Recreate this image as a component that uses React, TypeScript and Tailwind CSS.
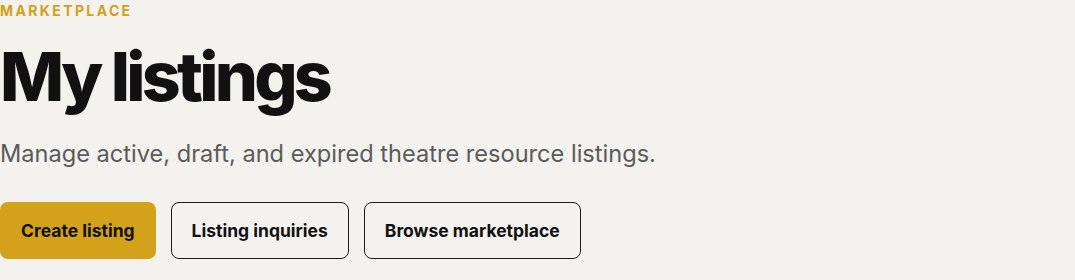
export default function App() {
  return (
    <div className="min-h-[280px] w-full bg-[#f3f2ef] font-['Inter',sans-serif]">
      <div className="flex flex-col items-start">
        <div className="text-[14px] leading-[22px] font-bold tracking-[0.17em] text-[#d4a017]">MARKETPLACE</div>
        <h1 className="mt-[20px] text-[68px] leading-none font-extrabold tracking-[-0.055em] text-[#111111]">My listings</h1>
        <p className="mt-[27px] text-[23.6px] leading-[33px] text-[#5b5b5b]">Manage active, draft, and expired theatre resource listings.</p>
        <div className="mt-[32px] flex gap-[15px]">
          <button className="h-[57px] rounded-[8px] bg-[#d4a11a] px-[21px] pt-px text-[17.5px] font-bold text-[#111111]">Create listing</button>
          <button className="h-[57px] rounded-[8px] border border-[#1a1a1a] px-[20px] pt-px text-[17.5px] font-bold text-[#111111]">Listing inquiries</button>
          <button className="h-[57px] rounded-[8px] border border-[#1a1a1a] px-[20px] pt-px text-[17.5px] font-bold text-[#111111]">Browse marketplace</button>
        </div>
      </div>
    </div>
  );
}
